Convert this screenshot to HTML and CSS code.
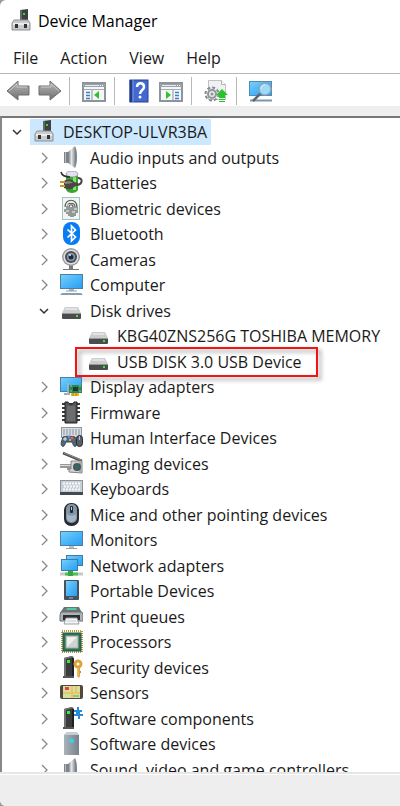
FILE: index.html
```html
<!DOCTYPE html>
<html lang="en">
<head>
    <meta charset="UTF-8">
    <meta name="viewport" content="width=device-width, initial-scale=1.0">
    <title>Device Manager</title>
    <link rel="stylesheet" href="styles.css">
</head>
<body>
    <!-- Shared icons -->
    <svg class="sprite" aria-hidden="true">
        <defs>
            <linearGradient id="blue" x1="0" y1="0" x2="1" y2="1">
                <stop offset="0" stop-color="#7cd0fb"/>
                <stop offset="0.5" stop-color="#4bb6f8"/>
                <stop offset="1" stop-color="#2a9df4"/>
            </linearGradient>
            <linearGradient id="metal" x1="0" y1="0" x2="1" y2="0">
                <stop offset="0" stop-color="#6f757b"/>
                <stop offset="0.5" stop-color="#e4e7ea"/>
                <stop offset="1" stop-color="#8b9197"/>
            </linearGradient>
            <linearGradient id="gray" x1="0" y1="0" x2="0" y2="1">
                <stop offset="0" stop-color="#b9b9b9"/>
                <stop offset="1" stop-color="#6f6f6f"/>
            </linearGradient>
            <linearGradient id="steel" x1="0" y1="0" x2="1" y2="0">
                <stop offset="0" stop-color="#a9b3bb"/>
                <stop offset="1" stop-color="#76818b"/>
            </linearGradient>
        </defs>

        <symbol id="pc" viewBox="0 0 24 24">
            <path d="M11 1l8-1v12h-8z" fill="#3d3f40"/>
            <path d="M11 1h2v11h-2z" fill="#666"/>
            <rect x="14" y="4" width="2" height="2" fill="#2be02b"/>
            <path d="M5 11h14l2 3v7H3v-7z" fill="#c9cbcd" stroke="#8d9093"/>
            <path d="M4 14h16v2H4z" fill="#eceded"/>
            <path d="M6 15h3v4H6zM15 15h3v4h-3z" fill="#333"/>
        </symbol>

        <symbol id="speaker" viewBox="0 0 24 24">
            <path d="M5 6h4v11H5z" fill="#7c838a"/>
            <path d="M6 6h1v11H6z" fill="#b8bec4"/>
            <path d="M9 6l7-6v22l-7-5z" fill="url(#metal)"/>
            <path d="M16 0c1 2 2 5 2 11s-1 9-2 11z" fill="#7d848b"/>
        </symbol>

        <symbol id="battery" viewBox="0 0 24 24">
            <path d="M7 4c3 2 9 2 12 0v15c-2 4-10 4-12 0z" fill="#35a82c"/>
            <path d="M14 6h3v13h-3z" fill="#7be46c"/>
            <ellipse cx="13" cy="3" rx="6" ry="3" fill="#e4e0f2" stroke="#8b86a0" stroke-width="0.7"/>
            <path d="M2 1c1 4 4 5 9 5" fill="none" stroke="#333" stroke-width="1.6"/>
            <path d="M18 14c6-1 6-7 1-7" fill="none" stroke="#444" stroke-width="2"/>
            <path d="M5 10c4-2 8-2 10 1l4 1v2l-4 2c-2 3-6 3-10 1z" fill="#4b4643"/>
            <path d="M6 11c3-1 6-1 8 1l-8 1z" fill="#918b87"/>
            <path d="M1 11h5M1 15h5" stroke="#c89a18" stroke-width="1.8"/>
        </symbol>

        <symbol id="finger" viewBox="0 0 24 24">
            <rect x="3.5" y="0.5" width="17" height="22" fill="#f1f5f4" stroke="#a5c2bc"/>
            <g fill="none" stroke="#555b5a" stroke-width="1.2">
                <path d="M6 10c0-9 12-9 12 0v6M8 17v-7c0-5 8-5 8 0v9M10 19v-9c0-3 4-3 4 0v10M12 10v10M6 12v3"/>
            </g>
            <path d="M7 8h2M15 12h3M7 14h3M13 15h3" stroke="#eef5f3"/>
        </symbol>

        <symbol id="bluetooth" viewBox="0 0 24 24">
            <rect x="4" y="0" width="17" height="23" rx="8" fill="#0a7cf2"/>
            <path d="M8.5 7.5l8 7.5-4 4V4l4 4-8 7.5" fill="none" stroke="#fff" stroke-width="1.7"/>
        </symbol>

        <symbol id="camera" viewBox="0 0 24 24">
            <path d="M10 17h4v4h-4z" fill="#77797c"/>
            <path d="M4 21.5h16" stroke="#777"/>
            <circle cx="12" cy="9" r="9" fill="#9b9da0"/>
            <circle cx="12" cy="9" r="7.5" fill="#dedfe0"/>
            <circle cx="12" cy="9" r="6" fill="#4d4f53"/>
            <circle cx="12" cy="9" r="4" fill="#8a9db0"/>
            <circle cx="12" cy="9" r="2.5" fill="#172b47"/>
            <circle cx="11" cy="7" r="1" fill="#dceaf7"/>
        </symbol>

        <symbol id="computer" viewBox="0 0 24 24">
            <rect x="1.5" y="1.500" width="22" height="14" fill="url(#blue)" stroke="#4b7fa5"/>
            <path d="M10 16h5v2h-5z" fill="#a7b4bf"/>
            <path d="M7 18h11" stroke="#8ea1b0"/>
            <path d="M3 20h19l2 2H1z" fill="#8b9dad"/>
        </symbol>

        <symbol id="disk" viewBox="0 0 24 24">
            <path d="M6 8h13l3 6H3z" fill="#cbcdcf"/>
            <path d="M7 9h11l1 2H6z" fill="#e2e3e4"/>
            <rect x="3" y="14" width="19" height="6" rx="1" fill="#4a4c4e"/>
            <path d="M3 14.5h19" stroke="#96999b"/>
            <rect x="17" y="16" width="2" height="2" fill="#30ed35"/>
        </symbol>

        <symbol id="display" viewBox="0 0 24 24">
            <rect x="1.5" y="2.5" width="21" height="14" fill="url(#blue)" stroke="#4b7fa5"/>
            <path d="M5 19h6" stroke="#9badb9" stroke-width="2"/>
            <rect x="10" y="10" width="13" height="8" fill="#31835a"/>
            <rect x="14" y="12" width="5" height="4" fill="#173c2a"/>
            <path d="M9 8v12" stroke="#aeb7ba" stroke-width="1.5"/>
            <path d="M11 11h2M20 11h2M11 16h2M20 16h2" stroke="#8bd38f"/>
            <path d="M12 18h8v3h-8z" fill="#f1b62b"/>
            <path d="M14 18v3M17 18v3" stroke="#bd8114"/>
        </symbol>

        <symbol id="chip" viewBox="0 0 24 24">
            <path d="M3 3h18M3 7h18M3 11h18M3 15h18M3 19h18" stroke="#3b3b3b" stroke-width="2"/>
            <path d="M6 1h3c1 3 5 3 6 0h3v21H6z" fill="#555759" stroke="#222"/>
            <path d="M8 5h8v15H8z" fill="#6b6d70"/>
        </symbol>

        <symbol id="hid" viewBox="0 0 24 24">
            <rect x="2.5" y="1.5" width="20" height="10" fill="#d9dde1" stroke="#90989f"/>
            <path d="M4 4h17M4 6h17M4 8h17" stroke="#89939c" stroke-dasharray="2 1"/>
            <path d="M4 11c3-1 9-1 12 0 1 3 2 8 1 9-2 2-3-2-4-4H7c-1 2-2 6-4 4-2-1 0-6 1-9z" fill="#50677a" stroke="#394754"/>
            <path d="M6 11v4M4 13h4" stroke="#e4ecf2"/>
            <circle cx="10" cy="11" r="1.5" fill="#3f92ed"/>
            <circle cx="13" cy="12" r="1.5" fill="#f15b37"/>
            <circle cx="11" cy="14" r="1" fill="#f3c035"/>
            <rect x="17.5" y="9.5" width="6" height="11" rx="3" fill="#56616b" stroke="#24292e"/>
            <path d="M20.5 10v4" stroke="#b9c5cf"/>
        </symbol>

        <symbol id="imaging" viewBox="0 0 24 24">
            <path d="M4 1l19 8" stroke="#4d4d4d" stroke-width="2.500"/>
            <path d="M5 1l17 7" stroke="#929292"/>
            <path d="M1 12h12v6H8v-2H1z" fill="#96989a"/>
            <path d="M1 13h12v1H1z" fill="#dcdddd"/>
            <path d="M12 9h11v12l-13-1v-3h2z" fill="#d3d4d4" stroke="#858585"/>
            <path d="M20 10h3v10h-3z" fill="#a9aaaa"/>
            <circle cx="18" cy="15" r="4" fill="#4c5557"/>
            <circle cx="18" cy="15" r="2" fill="#23706e"/>
        </symbol>

        <symbol id="keyboard" viewBox="0 0 24 24">
            <rect x="1.5" y="3.5" width="22" height="13" fill="#c9cfd6" stroke="#8b969f"/>
            <path d="M4 6.5h17M5 9.5h16M4 12.500h17" stroke="#f6f8f9" stroke-width="2" stroke-dasharray="2 1"/>
            <path d="M1 15h23v3H1z" fill="#424a52"/>
        </symbol>

        <symbol id="mouse" viewBox="0 0 24 24">
            <rect x="5" y="0" width="15" height="23" rx="7" fill="#272b30"/>
            <rect x="7" y="1" width="11" height="19" rx="5" fill="#8296aa"/>
            <path d="M8 11c2 2 7 2 9 0v5c-2 4-7 4-9 0z" fill="#a5b5c4"/>
            <rect x="11" y="3" width="3" height="7" rx="1" fill="#262a2f"/>
            <path d="M12.5 4v3" stroke="#c8d4df"/>
        </symbol>

        <symbol id="monitor" viewBox="0 0 24 24">
            <rect x="1.5" y="3.5" width="22" height="14" fill="url(#blue)" stroke="#4b7fa5"/>
            <path d="M10 18h5v2h-5z" fill="#b6c0c8"/>
            <path d="M7 20.5h11" stroke="#93a2ae"/>
        </symbol>

        <symbol id="network" viewBox="0 0 24 24">
            <rect x="7.5" y="1.5" width="16" height="10" fill="url(#blue)" stroke="#397da8"/>
            <rect x="2.5" y="5.5" width="16" height="11" fill="url(#blue)" stroke="#397da8"/>
            <path d="M1 20h23" stroke="#c6cbc9" stroke-width="3"/>
            <path d="M6 20h13" stroke="#4dc456" stroke-width="3"/>
            <path d="M9 17h5v5H9z" fill="#38a545"/>
        </symbol>

        <symbol id="portable" viewBox="0 0 24 24">
            <rect x="5" y="1" width="15" height="20" rx="1" fill="#48525c"/>
            <rect x="7" y="2" width="11" height="15" fill="url(#blue)"/>
            <path d="M10 19h4" stroke="#a9b5c0"/>
        </symbol>

        <symbol id="printer" viewBox="0 0 24 24">
            <path d="M5 2h15l3 6H1z" fill="#6b7176"/>
            <path d="M8 3h9l1 2H7z" fill="#59c6a0"/>
            <path d="M2 7h21l1 3v6H1v-6z" fill="#aeb3b7" stroke="#6c7277"/>
            <path d="M4 10h17v5H4z" fill="#2d3033"/>
            <path d="M7 13h11l2 6H5z" fill="#f4f5f6" stroke="#9ba1a5"/>
            <path d="M8 16h9" stroke="#c7cbce"/>
            <path d="M20 8h2" stroke="#36d64b"/>
        </symbol>

        <symbol id="processor" viewBox="0 0 24 24">
            <rect x="3" y="1" width="20" height="21" fill="none" stroke="#bd9540" stroke-width="2" stroke-dasharray="1 1"/>
            <rect x="4" y="3" width="18" height="18" fill="#2d7050" stroke="#245840"/>
            <rect x="7" y="6" width="12" height="12" fill="#cfd3d1" stroke="#a4b1aa"/>
            <path d="M8 17V7h10z" fill="#eff0ef"/>
        </symbol>

        <symbol id="tower" viewBox="0 0 24 24">
            <path d="M5 2l8-2v20H5z" fill="#3b3c3d"/>
            <path d="M5 2h2v18H5zM5 2l8-2 2 1-8 2z" fill="#707173"/>
            <path d="M13 1l2 1v18h-2z" fill="#1f2021"/>
            <path d="M4 20h11v2H4z" fill="#555"/>
            <rect x="8" y="4" width="3" height="3" fill="#35ef37"/>
        </symbol>

        <symbol id="security" viewBox="0 0 24 24">
            <use href="#tower" width="24" height="24"/>
            <circle cx="19" cy="8" r="3" fill="#fff" stroke="#dba43a" stroke-width="3"/>
            <path d="M18 11h3v9l-1 2-2-2z" fill="#dba43a"/>
            <path d="M19 12v8" stroke="#f3d078"/>
            <path d="M21 15h1v2h-1z" fill="#c08a25"/>
        </symbol>

        <symbol id="sensor" viewBox="0 0 24 24">
            <rect x="1" y="4" width="23" height="14" rx="2" fill="#51483f"/>
            <rect x="4" y="5" width="17" height="12" fill="#d5dfa2"/>
            <path d="M4 12h17M13 5v12M17 5v6" stroke="#ecc05a" stroke-width="1.5"/>
            <path d="M14 14h6v2h-6z" fill="#90c681"/>
            <rect x="6" y="6" width="4" height="3" fill="#ee4141"/>
        </symbol>

        <symbol id="component" viewBox="0 0 24 24">
            <use href="#tower" width="24" height="24"/>
            <path d="M15 3h3V0h2v3h3v2h-2v2h3v2h-3v3h-2V9h-4V7h2V5h-2z" fill="#278bd5"/>
        </symbol>

        <symbol id="software" viewBox="0 0 24 24">
            <path d="M5 3l3-3h9l3 3v20H5z" fill="url(#steel)"/>
            <path d="M5 3l3-3h9l3 3z" fill="#c7ced3"/>
            <path d="M12 6l3 2-1 3h-3l-1-3z" fill="#39d3e8"/>
        </symbol>

        <symbol id="arrow" viewBox="0 0 24 24">
            <path d="M1 12L12 2v5h11v9H12v5z" fill="url(#gray)" stroke="#6e6e6e" stroke-linejoin="round"/>
            <path d="M3 12l8-7v3h10" fill="none" stroke="#c9c9c9"/>
        </symbol>

        <symbol id="panel" viewBox="0 0 24 24">
            <rect x="1" y="4" width="22" height="18" fill="#f5f6f7" stroke="#8d949b" stroke-width="2"/>
            <path d="M1 5h22v3H1z" fill="#9aa1a8"/>
            <path d="M3 6.5h14" stroke="#e9ecee"/>
            <path d="M18 6.5h1M20 6.5h1" stroke="#fff"/>
            <path d="M2 10.5h20" stroke="#a5acb2"/>
        </symbol>

        <symbol id="chevron" viewBox="0 0 12 12">
            <path d="M4 1l5 5-5 5" fill="none" stroke="currentColor" stroke-width="1.3"/>
        </symbol>
        <symbol id="chevron-open" viewBox="0 0 12 12">
            <path d="M2 4l4 4 4-4" fill="none" stroke="currentColor" stroke-width="1.5"/>
        </symbol>
    </svg>

    <div class="window">
        <header class="titlebar">
            <svg class="icon"><use href="#pc"/></svg>
            <h1>Device Manager</h1>
        </header>

        <nav class="menu">
            <button type="button">File</button>
            <button type="button">Action</button>
            <button type="button">View</button>
            <button type="button">Help</button>
        </nav>

        <div class="toolbar">
            <div class="tool-group">
                <button type="button" aria-label="Back"><svg class="icon"><use href="#arrow"/></svg></button>
                <button type="button" aria-label="Forward"><svg class="icon flip"><use href="#arrow"/></svg></button>
            </div>
            <div class="tool-group">
                <button type="button" aria-label="Show or hide console tree">
                    <svg class="icon" viewBox="0 0 24 24">
                        <use href="#panel"/>
                        <path d="M10 11v10" stroke="#8d949b"/>
                        <path d="M4 13.5h4M4 16.5h4M4 19.5h4" stroke="#3b7fc4" stroke-width="1.5"/>
                        <path d="M17 12v8l-5-4z" fill="#2fc22c"/>
                    </svg>
                </button>
            </div>
            <div class="tool-group">
                <button type="button" aria-label="Help topics">
                    <svg class="icon" viewBox="0 0 24 24">
                        <rect x="3" y="1" width="18" height="22" fill="#4169cf" stroke="#2b439a"/>
                        <path d="M4 1v22" stroke="#243a8c" stroke-width="3"/>
                        <path d="M6 1v22" stroke="#7d9cec"/>
                        <path d="M10 8c0-5 7-5 7 0 0 3-4 3-4 7" fill="none" stroke="#fff" stroke-width="2.5"/>
                        <circle cx="13" cy="18" r="1.5" fill="#fff"/>
                    </svg>
                </button>
                <button type="button" aria-label="Show or hide action pane">
                    <svg class="icon" viewBox="0 0 24 24">
                        <use href="#panel"/>
                        <path d="M14 11v10" stroke="#8d949b"/>
                        <path d="M16 13.5h4M16 16.5h4M16 19.5h4" stroke="#3b7fc4" stroke-width="1.5"/>
                        <path d="M7 12v8l5-4z" fill="#2fc22c"/>
                    </svg>
                </button>
            </div>
            <div class="tool-group">
                <button type="button" aria-label="Update device driver">
                    <svg class="icon" viewBox="0 0 24 24">
                        <path d="M4.5 1.5h13l4 4v15h-17z" fill="#f0f1f1" stroke="#bfc1c3"/>
                        <path d="M17.5 1.5v4h4" fill="#fff" stroke="#aeb0b2"/>
                        <circle cx="8" cy="15" r="6.5" fill="none" stroke="#858b90" stroke-width="2" stroke-dasharray="3 2"/>
                        <circle cx="8" cy="15" r="4" fill="#e8eaeb" stroke="#8f959a" stroke-width="2"/>
                        <circle cx="8" cy="15" r="1.5" fill="#8f959a"/>
                        <path d="M18 10l6 6h-3v3h-6v-3h-3z" fill="#27c32a"/>
                        <path d="M15 20.5h6M15 22.5h6" stroke="#27c32a"/>
                    </svg>
                </button>
            </div>
            <div class="tool-group">
                <button type="button" aria-label="Scan for hardware changes">
                    <svg class="icon" viewBox="0 0 24 24">
                        <rect x="0.5" y="2.5" width="22" height="14" fill="url(#blue)" stroke="#4e8cb5"/>
                        <path d="M1 21.5h22" stroke="#8195a6" stroke-width="2"/>
                        <path d="M12 14l-8 8" stroke="#576876" stroke-width="2.5"/>
                        <circle cx="16" cy="10" r="6" fill="#9cdafb" stroke="#8fa2b1" stroke-width="1.5"/>
                        <path d="M12 10c0-3 2-4 4-4" fill="none" stroke="#d5f0ff"/>
                    </svg>
                </button>
            </div>
        </div>

        <main class="tree-pane">
            <ul class="tree">
                <li class="row root">
                    <button class="toggle open" type="button" aria-label="Collapse"><svg><use href="#chevron-open"/></svg></button>
                    <span class="label selected"><svg class="icon"><use href="#pc"/></svg>DESKTOP-ULVR3BA</span>
                </li>
                <li class="row">
                    <button class="toggle" type="button" aria-label="Expand"><svg><use href="#chevron"/></svg></button>
                    <span class="label"><svg class="icon"><use href="#speaker"/></svg>Audio inputs and outputs</span>
                </li>
                <li class="row">
                    <button class="toggle" type="button" aria-label="Expand"><svg><use href="#chevron"/></svg></button>
                    <span class="label"><svg class="icon"><use href="#battery"/></svg>Batteries</span>
                </li>
                <li class="row">
                    <button class="toggle" type="button" aria-label="Expand"><svg><use href="#chevron"/></svg></button>
                    <span class="label"><svg class="icon"><use href="#finger"/></svg>Biometric devices</span>
                </li>
                <li class="row">
                    <button class="toggle" type="button" aria-label="Expand"><svg><use href="#chevron"/></svg></button>
                    <span class="label"><svg class="icon"><use href="#bluetooth"/></svg>Bluetooth</span>
                </li>
                <li class="row">
                    <button class="toggle" type="button" aria-label="Expand"><svg><use href="#chevron"/></svg></button>
                    <span class="label"><svg class="icon"><use href="#camera"/></svg>Cameras</span>
                </li>
                <li class="row">
                    <button class="toggle" type="button" aria-label="Expand"><svg><use href="#chevron"/></svg></button>
                    <span class="label"><svg class="icon"><use href="#computer"/></svg>Computer</span>
                </li>
                <li class="row">
                    <button class="toggle open" type="button" aria-label="Collapse"><svg><use href="#chevron-open"/></svg></button>
                    <span class="label"><svg class="icon"><use href="#disk"/></svg>Disk drives</span>
                </li>
                <li class="row child">
                    <span class="label"><svg class="icon"><use href="#disk"/></svg>KBG40ZNS256G TOSHIBA MEMORY</span>
                </li>
                <li class="row child">
                    <span class="label marked"><svg class="icon"><use href="#disk"/></svg>USB DISK 3.0 USB Device</span>
                </li>
                <li class="row">
                    <button class="toggle" type="button" aria-label="Expand"><svg><use href="#chevron"/></svg></button>
                    <span class="label"><svg class="icon"><use href="#display"/></svg>Display adapters</span>
                </li>
                <li class="row">
                    <button class="toggle" type="button" aria-label="Expand"><svg><use href="#chevron"/></svg></button>
                    <span class="label"><svg class="icon"><use href="#chip"/></svg>Firmware</span>
                </li>
                <li class="row">
                    <button class="toggle" type="button" aria-label="Expand"><svg><use href="#chevron"/></svg></button>
                    <span class="label"><svg class="icon"><use href="#hid"/></svg>Human Interface Devices</span>
                </li>
                <li class="row">
                    <button class="toggle" type="button" aria-label="Expand"><svg><use href="#chevron"/></svg></button>
                    <span class="label"><svg class="icon"><use href="#imaging"/></svg>Imaging devices</span>
                </li>
                <li class="row">
                    <button class="toggle" type="button" aria-label="Expand"><svg><use href="#chevron"/></svg></button>
                    <span class="label"><svg class="icon"><use href="#keyboard"/></svg>Keyboards</span>
                </li>
                <li class="row">
                    <button class="toggle" type="button" aria-label="Expand"><svg><use href="#chevron"/></svg></button>
                    <span class="label"><svg class="icon"><use href="#mouse"/></svg>Mice and other pointing devices</span>
                </li>
                <li class="row">
                    <button class="toggle" type="button" aria-label="Expand"><svg><use href="#chevron"/></svg></button>
                    <span class="label"><svg class="icon"><use href="#monitor"/></svg>Monitors</span>
                </li>
                <li class="row">
                    <button class="toggle" type="button" aria-label="Expand"><svg><use href="#chevron"/></svg></button>
                    <span class="label"><svg class="icon"><use href="#network"/></svg>Network adapters</span>
                </li>
                <li class="row">
                    <button class="toggle" type="button" aria-label="Expand"><svg><use href="#chevron"/></svg></button>
                    <span class="label"><svg class="icon"><use href="#portable"/></svg>Portable Devices</span>
                </li>
                <li class="row">
                    <button class="toggle" type="button" aria-label="Expand"><svg><use href="#chevron"/></svg></button>
                    <span class="label"><svg class="icon"><use href="#printer"/></svg>Print queues</span>
                </li>
                <li class="row">
                    <button class="toggle" type="button" aria-label="Expand"><svg><use href="#chevron"/></svg></button>
                    <span class="label"><svg class="icon"><use href="#processor"/></svg>Processors</span>
                </li>
                <li class="row">
                    <button class="toggle" type="button" aria-label="Expand"><svg><use href="#chevron"/></svg></button>
                    <span class="label"><svg class="icon"><use href="#security"/></svg>Security devices</span>
                </li>
                <li class="row">
                    <button class="toggle" type="button" aria-label="Expand"><svg><use href="#chevron"/></svg></button>
                    <span class="label"><svg class="icon"><use href="#sensor"/></svg>Sensors</span>
                </li>
                <li class="row">
                    <button class="toggle" type="button" aria-label="Expand"><svg><use href="#chevron"/></svg></button>
                    <span class="label"><svg class="icon"><use href="#component"/></svg>Software components</span>
                </li>
                <li class="row">
                    <button class="toggle" type="button" aria-label="Expand"><svg><use href="#chevron"/></svg></button>
                    <span class="label"><svg class="icon"><use href="#software"/></svg>Software devices</span>
                </li>
                <li class="row">
                    <button class="toggle" type="button" aria-label="Expand"><svg><use href="#chevron"/></svg></button>
                    <span class="label"><svg class="icon"><use href="#speaker"/></svg>Sound, video and game controllers</span>
                </li>
            </ul>
        </main>

        <footer class="statusbar"></footer>
    </div>
</body>
</html>
```
FILE: styles.css
```css
* {
    margin: 0;
    padding: 0;
    box-sizing: border-box;
}

body {
    font-family: 'Segoe UI', 'Open Sans', 'Noto Sans', sans-serif;
    font-size: 16px;
    color: #1a1a1a;
    background: #999;
}

button {
    font: inherit;
    color: inherit;
    background: none;
    border: none;
}

.sprite {
    display: block;
    width: 0;
    height: 0;
}

.icon {
    display: block;
    width: 24px;
    height: 24px;
    flex-shrink: 0;
}

.flip {
    transform: scaleX(-1);
}

.window {
    display: flex;
    flex-direction: column;
    height: 100vh;
    background: #fff;
    border-radius: 6px 0 0 6px;
    overflow: hidden;
}

/* Title and menu */
.titlebar {
    display: flex;
    align-items: center;
    gap: 5px;
    height: 42px;
    padding: 0 9px;
    color: #000;
}

.titlebar h1 {
    font-size: 16px;
    font-weight: 400;
}

.menu {
    display: flex;
    align-items: center;
    gap: 22px;
    height: 32px;
    padding: 0 13px;
    border-bottom: 1px solid #b4b4ba;
}

/* Toolbar */
.toolbar {
    display: flex;
    align-items: center;
    height: 32px;
    padding-top: 2px;
}

.tool-group {
    display: flex;
    align-items: center;
    gap: 8px;
    height: 28px;
    padding: 0 8px 0 12px;
    border-right: 1px solid #b8b8b8;
}

.tool-group:first-child {
    padding: 0 7px 0 6px;
}

.tool-group:last-child {
    border-right: none;
}

/* Device tree */
.tree-pane {
    flex: 1;
    min-height: 0;
    border-top: 10px solid #eee;
    overflow: hidden;
}

.tree {
    height: 100%;
    padding-top: 1px;
    border-top: 2px solid #777;
    border-left: 2px solid #888;
    list-style: none;
    overflow: hidden;
}

.row {
    display: flex;
    align-items: center;
    height: 25px;
    padding-left: 33px;
}

.row:nth-child(odd) {
    height: 26px;
}

.row.root {
    padding-left: 6px;
}

.row.child {
    padding-left: 82px;
}

.toggle {
    display: flex;
    justify-content: center;
    width: 18px;
    margin-right: 4px;
    color: #888;
}

.toggle.open {
    color: #333;
}

.toggle svg {
    width: 12px;
    height: 12px;
}

.label {
    position: relative;
    display: flex;
    align-items: center;
    gap: 7px;
    height: 100%;
    padding: 0 4px 0 2px;
    white-space: nowrap;
}

.selected {
    background: #cce8ff;
}

.marked::after {
    content: '';
    position: absolute;
    inset: -2px -12px -3px -9px;
    border: 2px solid #f01414;
    filter: drop-shadow(3px 3px 2px rgba(0,0,0,0.4));
}

/* Status bar */
.statusbar {
    height: 34px;
    background: #eee;
    border-top: 2px solid #e6e6e6;
    box-shadow: inset 0 1px #fff;
}
```
